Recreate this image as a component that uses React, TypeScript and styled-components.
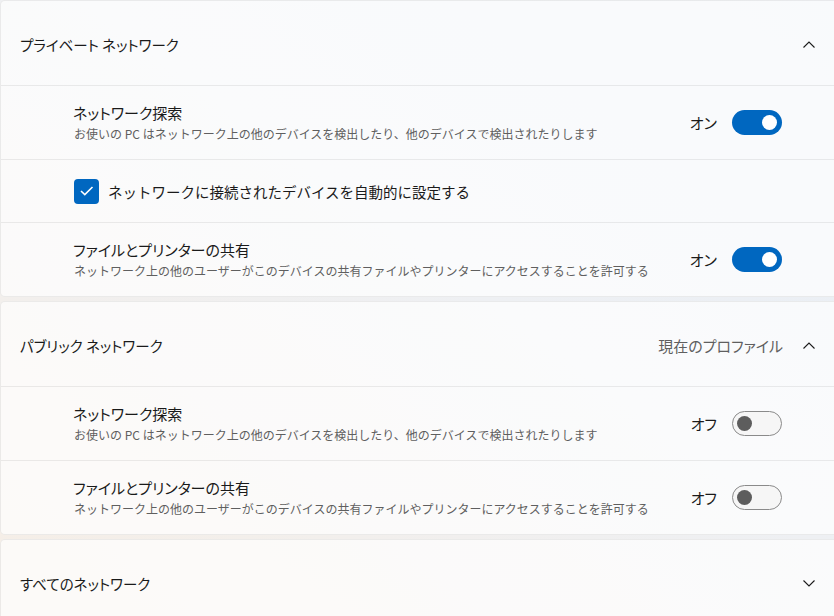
import React from "react";
import styled, { createGlobalStyle } from "styled-components";

const Global = createGlobalStyle`
  html, body { margin: 0; padding: 0; }
  body {
    width: 834px;
    height: 616px;
    overflow: hidden;
    font-family: "Noto Sans CJK JP", "Noto Sans", sans-serif;
    background: linear-gradient(to left bottom, #e8eef6 0%, #eef0f3 45%, #f6eee6 100%);
    color: #1a1a1a;
  }
`;

const Page = styled.div`
  width: 842px;
  display: flex;
  flex-direction: column;
  gap: 4px;
`;

const Card = styled.section`
  background: rgba(255, 255, 255, 0.7);
  border: 1px solid rgba(0, 0, 0, 0.065);
  border-radius: 5px;
  display: flex;
  flex-direction: column;
`;

const Header = styled.div`
  height: 84px;
  display: flex;
  align-items: center;
  padding: 2px 26px 0 19px;
  box-sizing: border-box;
  font-size: 14.5px;
  font-feature-settings: "palt";
`;

const HeaderTitle = styled.div`
  flex: 1;
`;

const HeaderMeta = styled.div`
  color: #5f5f5f;
  font-size: 15px;
  margin-right: 20px;
`;

const Chevron = styled.svg`
  width: 12px;
  height: 7px;
  display: block;
`;

const Row = styled.div<{ $h?: number }>`
  height: ${(p) => p.$h ?? 73}px;
  border-top: 1px solid rgba(0, 0, 0, 0.07);
  display: flex;
  align-items: center;
  padding: 0 59px 0 72px;
`;

const Texts = styled.div`
  flex: 1;
  display: flex;
  flex-direction: column;
  padding-top: 1px;
`;

const Title = styled.div`
  font-size: 15px;
  line-height: 20px;
  color: #1a1a1a;
  font-feature-settings: "palt";
`;

const Desc = styled.div`
  font-size: 12px;
  line-height: 18px;
  margin-top: 2px;
  color: #5f5f5f;
  padding-left: 1px;
`;

const StateLabel = styled.span`
  font-size: 15px;
  margin-right: 15px;
  font-feature-settings: "palt";
`;

const Track = styled.div<{ $on: boolean }>`
  width: 50px;
  height: 25px;
  box-sizing: border-box;
  border-radius: 13px;
  display: flex;
  align-items: center;
  justify-content: ${(p) => (p.$on ? "flex-end" : "flex-start")};
  background: ${(p) => (p.$on ? "#0067c0" : "#f6f6f6")};
  border: ${(p) => (p.$on ? "none" : "1px solid #8a8a8a")};
  padding: ${(p) => (p.$on ? "0 5px" : "0 4px")};
`;

const Knob = styled.div<{ $on: boolean }>`
  width: 15px;
  height: 15px;
  border-radius: 50%;
  background: ${(p) => (p.$on ? "#ffffff" : "#5d5d5d")};
`;

const CheckBox = styled.div`
  width: 25px;
  height: 25px;
  margin-left: 1px;
  border-radius: 4px;
  background: #0067c0;
  display: flex;
  align-items: center;
  justify-content: center;
  margin-right: 9px;
`;

const CheckText = styled.div`
  font-size: 14.5px;
  color: #1a1a1a;
`;

const Up = () => (
  <Chevron viewBox="0 0 12 7">
    <polyline points="0.5,6.5 6,1 11.5,6.5" fill="none" stroke="#1a1a1a" strokeWidth="1.1" />
  </Chevron>
);

const Down = () => (
  <Chevron viewBox="0 0 12 7">
    <polyline points="0.5,0.5 6,6 11.5,0.5" fill="none" stroke="#1a1a1a" strokeWidth="1.1" />
  </Chevron>
);

const Toggle = ({ on }: { on: boolean }) => (
  <>
    <StateLabel>{on ? "オン" : "オフ"}</StateLabel>
    <Track $on={on}>
      <Knob $on={on} />
    </Track>
  </>
);

const SettingRow = ({ title, desc, on }: { title: string; desc: string; on: boolean }) => (
  <Row>
    <Texts>
      <Title>{title}</Title>
      <Desc>{desc}</Desc>
    </Texts>
    <Toggle on={on} />
  </Row>
);

const DISC_T = "ネットワーク探索";
const DISC_D = "お使いの PC はネットワーク上の他のデバイスを検出したり、他のデバイスで検出されたりします";
const SHARE_T = "ファイルとプリンターの共有";
const SHARE_D = "ネットワーク上の他のユーザーがこのデバイスの共有ファイルやプリンターにアクセスすることを許可する";

export default function App() {
  return (
    <>
      <Global />
      <Page>
        <Card>
          <Header>
            <HeaderTitle>プライベート ネットワーク</HeaderTitle>
            <Up />
          </Header>
          <SettingRow title={DISC_T} desc={DISC_D} on />
          <Row $h={62}>
            <CheckBox>
              <svg width="14" height="10" viewBox="0 0 14 10">
                <polyline points="1,5 4.8,8.6 12.5,1" fill="none" stroke="#fff" strokeWidth="1.6" />
              </svg>
            </CheckBox>
            <CheckText>ネットワークに接続されたデバイスを自動的に設定する</CheckText>
          </Row>
          <SettingRow title={SHARE_T} desc={SHARE_D} on />
        </Card>
        <Card>
          <Header>
            <HeaderTitle>パブリック ネットワーク</HeaderTitle>
            <HeaderMeta>現在のプロファイル</HeaderMeta>
            <Up />
          </Header>
          <SettingRow title={DISC_T} desc={DISC_D} on={false} />
          <SettingRow title={SHARE_T} desc={SHARE_D} on={false} />
        </Card>
        <Card>
          <Header>
            <HeaderTitle>すべてのネットワーク</HeaderTitle>
            <Down />
          </Header>
          <Row />
        </Card>
      </Page>
    </>
  );
}
